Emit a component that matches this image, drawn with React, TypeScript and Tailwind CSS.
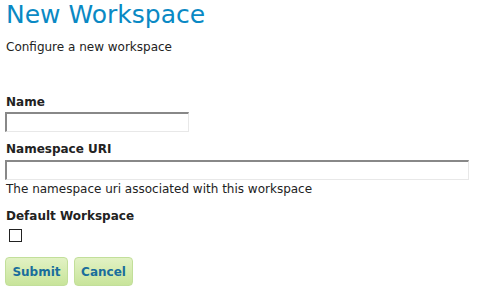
export default function App() {
	return (
		<div className="bg-white min-h-screen px-[6px] text-[#222] font-['DejaVu_Sans',sans-serif]">
			<h1 className="text-[25px] leading-[29px] text-[#0a89c4] font-normal">New Workspace</h1>
			<p className="text-[12px] leading-[14px] mt-[11px]">Configure a new workspace</p>
			<form className="mt-[41px]">
				<label className="block text-[12px] leading-[14px] font-bold text-[#222]">Name</label>
				<input
					type="text"
					className="block mt-[3px] -ml-[1px] w-[184px] h-[20px] border border-[#e8e8e8] border-t-2 border-l-2 border-t-[#888] border-l-[#888] bg-white outline-none"
				/>
				<label className="block mt-[10px] text-[12px] leading-[14px] font-bold text-[#222]">Namespace URI</label>
				<input
					type="text"
					className="block mt-[4px] -ml-[1px] w-[464px] h-[20px] border border-[#e8e8e8] border-t-2 border-l-2 border-t-[#888] border-l-[#888] bg-white outline-none"
				/>
				<p className="text-[12px] leading-[14px] mt-[2px] text-[#222]">The namespace uri associated with this workspace</p>
				<label className="block mt-[13px] text-[12px] leading-[14px] font-bold text-[#222]">Default Workspace</label>
				<input type="checkbox" className="block mt-[6px] ml-[3px] w-[13px] h-[13px] appearance-none border border-[#222] bg-white" />
				<div className="flex gap-[6px] mt-[15px] -ml-[1px]">
					<button
						type="button"
						className="w-[63px] h-[29px] rounded-[4px] border border-[#c2df9a] bg-gradient-to-b from-[#e2f2c4] to-[#c8e49a] text-[12px] font-bold text-[#1a6e9c]"
					>
						Submit
					</button>
					<button
						type="button"
						className="w-[59px] h-[29px] rounded-[4px] border border-[#c2df9a] bg-gradient-to-b from-[#e2f2c4] to-[#c8e49a] text-[12px] font-bold text-[#1a6e9c]"
					>
						Cancel
					</button>
				</div>
			</form>
		</div>
	);
}
